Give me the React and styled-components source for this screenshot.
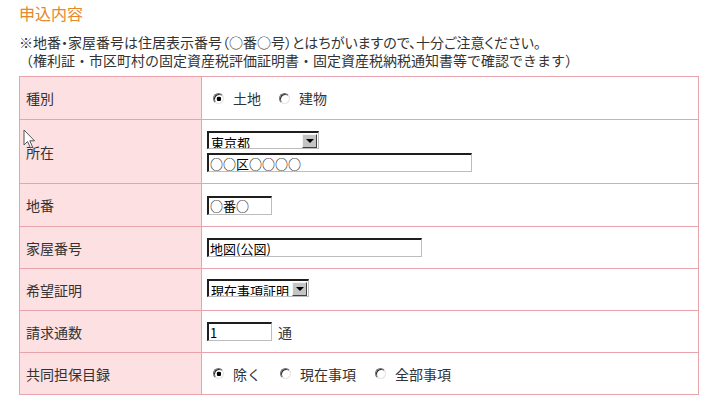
import React from "react";
import styled, { createGlobalStyle } from "styled-components";

const GlobalStyle = createGlobalStyle`
  body {
    margin: 0;
    background: #fff;
    font-family: "Noto Sans CJK JP", "Noto Sans", sans-serif;
  }
`;

const Page = styled.div`
  position: relative;
  padding: 3px 0 0 19px;
  color: #333;
`;

const Title = styled.h2`
  margin: 0;
  font-size: 16px;
  line-height: 21px;
  font-weight: normal;
  color: #e5872c;
`;

const Note = styled.div`
  margin: 9px 0 7px;
  font-size: 14px;
`;

const NoteLine = styled.p`
  margin: 0;
  line-height: 18px;
  font-feature-settings: ${(p) => (p.$narrow ? '"palt"' : "normal")};
`;

const FormTable = styled.table`
  border-collapse: collapse;
  width: 680px;
  font-size: 14px;
`;

const Row = styled.tr`
  height: ${(p) => p.$h}px;
`;

const Label = styled.th`
  width: 169px;
  padding: 0 6px;
  background: #fde0e1;
  border: 1px solid #e9a3ad;
  text-align: left;
  font-weight: normal;
  color: #333;
  vertical-align: middle;
`;

const Value = styled.td`
  padding: 0 5px;
  border: 1px solid #e9a3ad;
  vertical-align: middle;
`;

const Stack = styled.div`
  display: flex;
  flex-direction: column;
  align-items: flex-start;
  gap: 4px;
`;

const Inline = styled.div`
  display: flex;
  align-items: center;
  gap: 6px;
`;

const TextBox = styled.input`
  box-sizing: border-box;
  width: ${(p) => p.$w}px;
  height: 19px;
  margin: 0;
  padding: 0 1px;
  font: 13px "Noto Sans CJK JP", sans-serif;
  color: #000;
  background: #fff;
  border-top: 2px solid #1e1e1e;
  border-left: 2px solid #1e1e1e;
  border-right: 1px solid #bdbdbd;
  border-bottom: 1px solid #bdbdbd;
  outline: none;
`;

const SelectFrame = styled.span`
  box-sizing: border-box;
  display: inline-flex;
  align-items: center;
  width: ${(p) => p.$w}px;
  height: 18px;
  background: #fff;
  border-top: 2px solid #1e1e1e;
  border-left: 2px solid #1e1e1e;
  border-right: 1px solid #bdbdbd;
  border-bottom: 1px solid #bdbdbd;
`;

const SelectField = styled.select`
  flex: 1;
  min-width: 0;
  height: 100%;
  margin: 0;
  padding: 0 0 0 2px;
  appearance: none;
  border: none;
  background: transparent;
  font: 13px "Noto Sans CJK JP", sans-serif;
  color: #000;
  outline: none;
`;

const ArrowButton = styled.span`
  box-sizing: border-box;
  display: flex;
  align-items: center;
  justify-content: center;
  width: 15px;
  height: 14px;
  margin-right: 1px;
  background: #c4c4c4;
  border-top: 1px solid #f4f4f4;
  border-left: 1px solid #f4f4f4;
  border-right: 1px solid #404040;
  border-bottom: 1px solid #404040;

  &::after {
    content: "";
    border-left: 4px solid transparent;
    border-right: 4px solid transparent;
    border-top: 4px solid #000;
  }
`;

const RadioGroup = styled.div`
  display: flex;
  align-items: center;
  gap: ${(p) => p.$gap}px;
  padding-left: ${(p) => p.$indent}px;
`;

const RadioLabel = styled.label`
  display: inline-flex;
  align-items: center;
  gap: 9px;
  font-size: 14px;
  color: #333;
`;

const Radio = styled.input.attrs({ type: "radio" })`
  box-sizing: border-box;
  appearance: none;
  width: 11px;
  height: 11px;
  margin: 0;
  border-radius: 50%;
  border: 1px solid;
  border-color: #707070 #e4e4e4 #e4e4e4 #707070;
  box-shadow: inset 1px 1px 0 #303030;
  background: #fff;

  &:checked {
    background: radial-gradient(circle at 55% 55%, #000 0 2px, #fff 2.6px);
  }
`;

const Cursor = styled.svg`
  position: absolute;
  left: 23px;
  top: 129px;
  pointer-events: none;
`;

const Select = ({ w, value }) => (
  <SelectFrame $w={w}>
    <SelectField defaultValue={value}>
      <option>{value}</option>
    </SelectField>
    <ArrowButton />
  </SelectFrame>
);

export default function App() {
  return (
    <>
      <GlobalStyle />
      <Page>
        <Title>申込内容</Title>
        <Note>
          <NoteLine $narrow>
            ※地番・家屋番号は住居表示番号（○番○号）とはちがいますので、十分ご注意ください。
          </NoteLine>
          <NoteLine>
            （権利証・市区町村の固定資産税評価証明書・固定資産税納税通知書等で確認できます）
          </NoteLine>
        </Note>
        <FormTable>
          <tbody>
            <Row $h={43}>
              <Label>種別</Label>
              <Value>
                <RadioGroup $gap={18} $indent={6}>
                  <RadioLabel>
                    <Radio name="kind" defaultChecked />
                    土地
                  </RadioLabel>
                  <RadioLabel>
                    <Radio name="kind" />
                    建物
                  </RadioLabel>
                </RadioGroup>
              </Value>
            </Row>
            <Row $h={64}>
              <Label>所在</Label>
              <Value>
                <Stack>
                  <Select w={112} value="東京都" />
                  <TextBox $w={265} defaultValue="○○区○○○○" />
                </Stack>
              </Value>
            </Row>
            <Row $h={43}>
              <Label>地番</Label>
              <Value>
                <TextBox $w={65} defaultValue="○番○" />
              </Value>
            </Row>
            <Row $h={42}>
              <Label>家屋番号</Label>
              <Value>
                <TextBox $w={215} defaultValue="地図(公図)" />
              </Value>
            </Row>
            <Row $h={42}>
              <Label>希望証明</Label>
              <Value>
                <Select w={102} value="現在事項証明" />
              </Value>
            </Row>
            <Row $h={42}>
              <Label>請求通数</Label>
              <Value>
                <Inline>
                  <TextBox $w={65} defaultValue="1" />
                  通
                </Inline>
              </Value>
            </Row>
            <Row $h={42}>
              <Label>共同担保目録</Label>
              <Value>
                <RadioGroup $gap={19} $indent={6}>
                  <RadioLabel>
                    <Radio name="kyodo" defaultChecked />
                    除く
                  </RadioLabel>
                  <RadioLabel>
                    <Radio name="kyodo" />
                    現在事項
                  </RadioLabel>
                  <RadioLabel>
                    <Radio name="kyodo" />
                    全部事項
                  </RadioLabel>
                </RadioGroup>
              </Value>
            </Row>
          </tbody>
        </FormTable>
        <Cursor width="13" height="20" viewBox="0 0 13 20">
          <path
            d="M1 1 L1 16 L4.5 12.5 L7.5 19 L9.5 18 L6.8 11.8 L11.5 11.8 Z"
            fill="#fff"
            stroke="#555"
            strokeWidth="1"
            strokeLinejoin="round"
          />
        </Cursor>
      </Page>
    </>
  );
}
